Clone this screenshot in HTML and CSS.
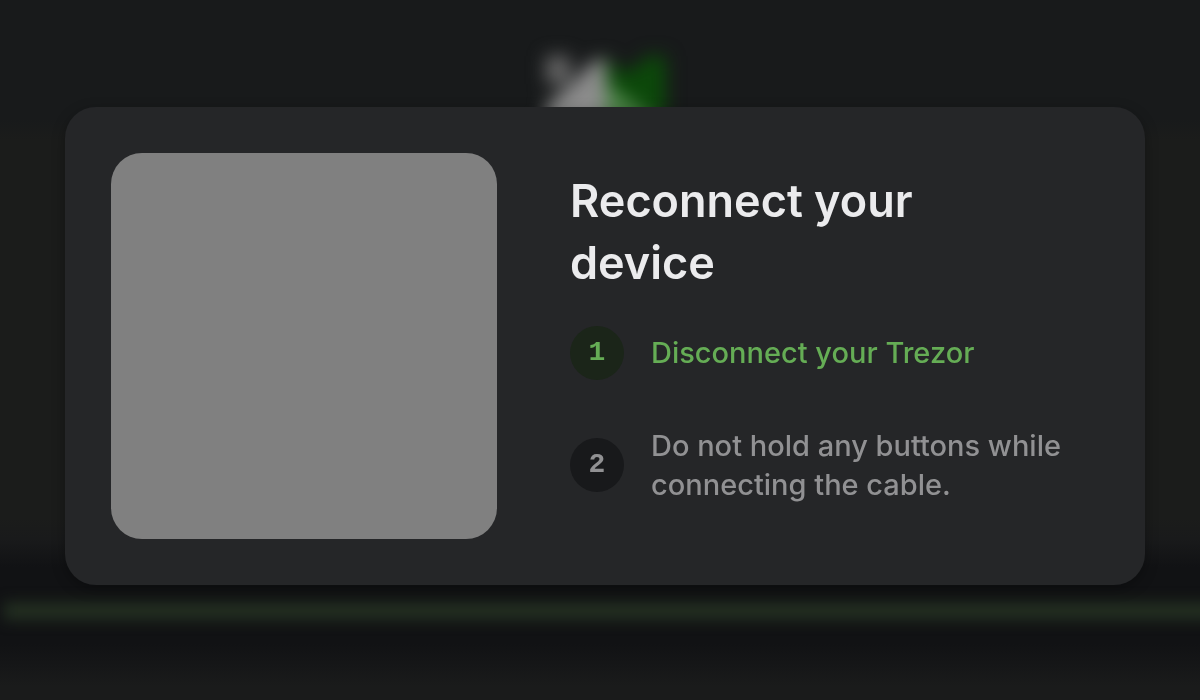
FILE: index.html
```
<!DOCTYPE html>
<html lang="en">
<head>
<meta charset="utf-8">
<meta name="viewport" content="width=device-width, initial-scale=1">
<title>Reconnect your device</title>
<link rel="stylesheet" href="styles.css">
</head>
<body class="page">
  <div class="backdrop" aria-hidden="true">
    <svg class="backdrop-mark" viewBox="0 0 120 120" overflow="visible">
      <path fill="#666666" d="M0 0 H24 V28 H0 Z"/>
      <path fill="#8c8c8c" d="M60 2 V120 H0 V50 L26 28 L46 6 Z"/>
      <path fill="#0c480a" d="M60 2 L74 14 L88 14 L100 0 L120 0 V60 H60 Z"/>
      <path fill="#4a8245" d="M60 26 L120 72 V120 H60 Z"/>
    </svg>
    <div class="backdrop-line"></div>
  </div>
  <main class="stage">
    <section class="card" role="dialog" aria-labelledby="title">
      <div class="media"></div>
      <div class="content">
        <h1 class="title" id="title">Reconnect your device</h1>
        <ol class="steps">
          <li class="step step-active">
            <span class="badge">1</span>
            <span class="step-text">Disconnect your Trezor</span>
          </li>
          <li class="step">
            <span class="badge">2</span>
            <span class="step-text">Do not hold any buttons while connecting the cable.</span>
          </li>
        </ol>
      </div>
    </section>
  </main>
</body>
</html>
```
FILE: styles.css
```
* {
  box-sizing: border-box;
}

.page {
  margin: 0;
  background: #181a1b;
  font-family: Inter, "Liberation Sans", sans-serif;
}

.backdrop {
  position: fixed;
  inset: 0;
  overflow: hidden;
  background: linear-gradient(#181a1b 17%, #1b1c1b 20%, #1b1c1b 74%, #191a1b 77%, #111214 81%, #111214 92%, #1a1b1b 98%);
}

.backdrop-mark {
  position: absolute;
  top: 56px;
  left: calc(50% - 54px);
  width: 120px;
  filter: blur(9px);
}

.backdrop-line {
  position: absolute;
  top: 602px;
  left: 4px;
  right: -20px;
  height: 18px;
  background: #232f21;
  filter: blur(7px);
}

.stage {
  position: relative;
  display: flex;
  align-items: center;
  min-height: 100vh;
  padding: 0 55px 9px 65px;
}

.card {
  flex: 1;
  display: flex;
  align-items: center;
  gap: 73px;
  padding: 46px;
  border-radius: 31px;
  background: #252628;
  box-shadow: 0 4px 14px rgba(0, 0, 0, 0.3);
}

.media {
  flex: none;
  width: 386px;
  aspect-ratio: 1;
  border-radius: 31px;
  background: #808080;
}

.content {
  flex: 1;
  padding: 0 28px 18px 0;
}

.title {
  max-width: 480px;
  margin: 0 0 32px;
  color: #ebebed;
  font-size: 45px;
  font-weight: 600;
  line-height: 62px;
}

.steps {
  display: flex;
  flex-direction: column;
  gap: 46px;
  margin: 0;
  padding: 0;
  list-style: none;
}

.step {
  display: flex;
  align-items: center;
  gap: 27px;
  color: #919193;
  font-size: 29px;
  font-weight: 500;
  line-height: 39px;
}

.step-active {
  color: #65ad55;
}

.badge {
  flex: none;
  display: grid;
  place-items: center;
  width: 54px;
  height: 54px;
  border-radius: 50%;
  background: #18191b;
  font-family: "Liberation Mono", monospace;
  font-size: 28px;
  font-weight: 700;
}

.step-active .badge {
  background: #1b2519;
}
```
